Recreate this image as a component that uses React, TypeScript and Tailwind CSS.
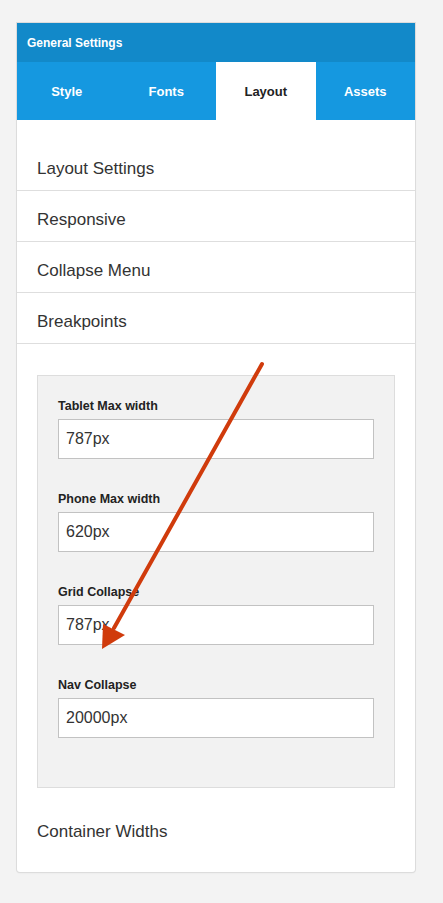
import React from "react";

const tabs = ["Style", "Fonts", "Layout", "Assets"];
const sections = ["Layout Settings", "Responsive", "Collapse Menu", "Breakpoints"];
const fields = [
  { label: "Tablet Max width", value: "787px" },
  { label: "Phone Max width", value: "620px" },
  { label: "Grid Collapse", value: "787px" },
  { label: "Nav Collapse", value: "20000px" },
];

export default function App() {
  return (
    <div
      className="relative min-h-[903px] w-[443px] bg-[#f3f3f3] pt-[23px] pl-[17px]"
      style={{ fontFamily: '"Liberation Sans", Arial, sans-serif' }}
    >
      <div className="w-[398px] overflow-hidden rounded-b-[3px] bg-white shadow-[0_0_0_1px_#dcdcdc,0_1px_2px_rgba(0,0,0,0.08)]">
        {/* Header */}
        <div className="flex h-[39px] items-center bg-[#1289c9] px-[10px] text-[12px] font-bold text-white">
          General Settings
        </div>

        {/* Tabs */}
        <div className="grid h-[58px] grid-cols-4 bg-[#1598e0]">
          {tabs.map((t) => (
            <div
              key={t}
              className={`flex items-center justify-center pt-[2px] text-[13px] font-bold ${
                t === "Layout" ? "bg-white text-[#222]" : "text-white"
              }`}
            >
              {t}
            </div>
          ))}
        </div>

        {/* Section list */}
        <div className="pt-[20px]">
          {sections.map((s) => (
            <div
              key={s}
              className="flex h-[51px] items-center border-b border-[#dedede] px-[20px] pt-[8px] text-[17px] text-[#333]"
            >
              {s}
            </div>
          ))}
        </div>

        {/* Breakpoints panel */}
        <div className="px-[20px] pt-[31px]">
          <div className="border border-[#dddddd] bg-[#f2f2f2] px-[20px] pt-[23px] pb-[49px]">
            {fields.map((f, i) => (
              <div key={f.label} className={i > 0 ? "mt-[33px]" : ""}>
                <div className="text-[12.5px] font-bold leading-[15px] text-[#222]">
                  {f.label}
                </div>
                <div className="mt-[5px] flex h-[40px] items-center border border-[#c2c2c2] bg-white px-[7px] text-[16px] text-[#333]">
                  {f.value}
                </div>
              </div>
            ))}
          </div>
        </div>

        <div className="flex h-[84px] items-center px-[20px] pt-[4px] text-[17px] text-[#333]">
          Container Widths
        </div>
      </div>

      {/* Annotation arrow */}
      <svg
        className="pointer-events-none absolute left-0 top-0"
        width="443"
        height="903"
        viewBox="0 0 443 903"
      >
        <line x1="262" y1="364" x2="114" y2="628" stroke="#d03b0c" strokeWidth="4" strokeLinecap="round" />
        <polygon points="102,649 103,624 125,635" fill="#d03b0c" />
      </svg>
    </div>
  );
}
